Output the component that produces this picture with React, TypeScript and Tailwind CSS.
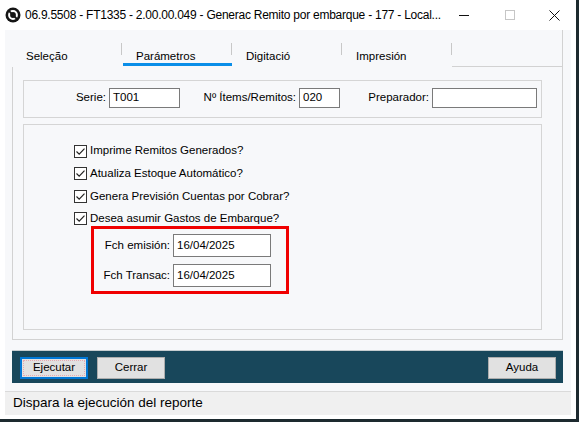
import React from "react";

const tabs = ["Seleção", "Parámetros", "Digitació", "Impresión"];

const checks = [
  "Imprime Remitos Generados?",
  "Atualiza Estoque Automático?",
  "Genera Previsión Cuentas por Cobrar?",
  "Desea asumir Gastos de Embarque?",
];

function TotvsIcon() {
  return (
    <svg width="16" height="16" viewBox="0 0 16 16">
      <circle cx="8" cy="8" r="7.5" fill="#151515" />
      <circle cx="8" cy="8" r="3.9" fill="none" stroke="#fff" strokeWidth="2" />
      <path d="M3.2 4.6 L11.4 12.8 L12.8 11.4 L4.6 3.2 Z" fill="#151515" />
      <circle cx="8" cy="8" r="1.6" fill="#151515" />
    </svg>
  );
}

function CheckBox() {
  return (
    <div className="flex h-[13px] w-[13px] items-center justify-center border border-[#333] bg-white">
      <svg width="11" height="11" viewBox="0 0 11 11">
        <path d="M1.5 5.5 L4.2 8.2 L9.5 2.6" fill="none" stroke="#222" strokeWidth="1.2" />
      </svg>
    </div>
  );
}

function Field({ value, w, h = "h-[20px]" }: { value: string; w: string; h?: string }) {
  return (
    <div className={`${w} ${h} flex items-center border border-[#7a7a7a] bg-white pl-[3px] text-black`}>
      {value}
    </div>
  );
}

function Btn({ label, focused }: { label: string; focused?: boolean }) {
  if (focused) {
    return (
      <div className="flex h-[22px] w-[68px] items-center justify-center border-2 border-[#0078d7] bg-[#e1e1e1] p-[1px]">
        <div className="flex h-full w-full items-center justify-center border border-dotted border-[#e6a8b0] text-black">
          {label}
        </div>
      </div>
    );
  }
  return (
    <div className="flex h-[22px] w-[68px] items-center justify-center border border-[#adadad] bg-[#e1e1e1] text-black">
      {label}
    </div>
  );
}

export default function App() {
  return (
    <div className="h-[422px] w-[579px] overflow-hidden bg-[#1d2a2f] font-['Liberation_Sans',Arial,sans-serif] text-[11.5px] text-black">
      <div className="flex h-[419px] w-[576px] flex-col bg-white">
        {/* title bar */}
        <div className="flex h-[30px] items-center pl-[5px]">
          <TotvsIcon />
          <span className="ml-[4px] text-[12px] tracking-[-0.25px]">
            06.9.5508 - FT1335 - 2.00.00.049 - Generac Remito por embarque - 177 - Local...
          </span>
          <div className="ml-auto flex h-full">
            <div className="flex h-full w-[46px] items-center justify-center">
              <div className="h-px w-[10px] bg-[#111]" />
            </div>
            <div className="flex h-full w-[46px] items-center justify-center">
              <div className="h-[10px] w-[10px] border border-[#c6c6c6]" />
            </div>
            <div className="flex h-full w-[43px] items-center justify-center">
              <svg width="11" height="11" viewBox="0 0 11 11">
                <path d="M0.5 0.5 L10.5 10.5 M10.5 0.5 L0.5 10.5" stroke="#111" strokeWidth="1" />
              </svg>
            </div>
          </div>
        </div>

        {/* client area */}
        <div className="mx-[5px] flex h-[361px] flex-col bg-[#f7f8fa]">
          <div className="ml-[7px] mr-[8px] flex flex-col">
            {/* tabs */}
            <div className="flex h-[37px]">
              {tabs.map((t, i) => (
                <div key={t} className="relative flex w-[110px] flex-col">
                  <div className="absolute right-0 top-[13px] h-[12px] w-px bg-[#c8c8c8]" />
                  <div className="pl-[14px] pt-[20px] leading-[13px]">{t}</div>
                  {i === 1 ? (
                    <div className="mb-[1px] ml-px mt-auto h-[3px] shrink-0 bg-[#0a8ee8]" />
                  ) : null}
                </div>
              ))}
              <div className="flex-1 border-b border-r border-[#d2d2d2]" />
            </div>

            {/* panel */}
            <div className="flex h-[273px] flex-col border-x border-b border-[#d2d2d2] pb-[9px] pl-[10px] pr-[20px] pt-[13px]">
              <div className="flex h-[38px] items-center border border-[#d5d5d5] pb-[2px]">
                <div className="w-[82px] text-right">Serie:</div>
                <div className="ml-[3px]">
                  <Field value="T001" w="w-[71px]" />
                </div>
                <div className="w-[116px] text-right">Nº Ítems/Remitos:</div>
                <div className="ml-[3px]">
                  <Field value="020" w="w-[41px]" />
                </div>
                <div className="w-[89px] text-right">Preparador:</div>
                <div className="ml-[3px]">
                  <Field value="" w="w-[105px]" />
                </div>
              </div>

              <div className="mt-[6px] flex h-[206px] flex-col border border-[#d5d5d5] pl-[50px] pt-[16px]">
                <div className="flex flex-col gap-[2.67px]">
                  {checks.map((c) => (
                    <div key={c} className="flex h-[20px] items-center">
                      <CheckBox />
                      <span className="ml-[3px]">{c}</span>
                    </div>
                  ))}
                </div>

                <div className="ml-[17px] mt-[-3px] flex w-[198px] flex-col gap-[7px] border-[3px] border-[#f00000] pb-[4px] pt-[5px]">
                  <div className="flex items-center">
                    <div className="w-[76px] text-right">Fch emisión:</div>
                    <div className="ml-[3px]">
                      <Field value="16/04/2025" w="w-[98px]" h="h-[23px]" />
                    </div>
                  </div>
                  <div className="flex items-center">
                    <div className="w-[76px] text-right">Fch Transac:</div>
                    <div className="ml-[3px]">
                      <Field value="16/04/2025" w="w-[98px]" h="h-[23px]" />
                    </div>
                  </div>
                </div>
              </div>
            </div>

            {/* button bar */}
            <div className="mt-[10px] flex h-[33px] items-start border-t border-[#c6cdd0] bg-[#18475b] pl-[8px] pr-[7px] pt-[6px]">
              <Btn label="Ejecutar" focused />
              <div className="ml-[9px]">
                <Btn label="Cerrar" />
              </div>
              <div className="ml-auto">
                <Btn label="Ayuda" />
              </div>
            </div>
          </div>
        </div>

        {/* status bar */}
        <div className="mx-[5px] flex h-[24px] items-center border-t border-[#dadada] bg-[#f0f0f0] pl-[8px] text-[13.5px]">
          Dispara la ejecución del reporte
        </div>
      </div>
    </div>
  );
}
